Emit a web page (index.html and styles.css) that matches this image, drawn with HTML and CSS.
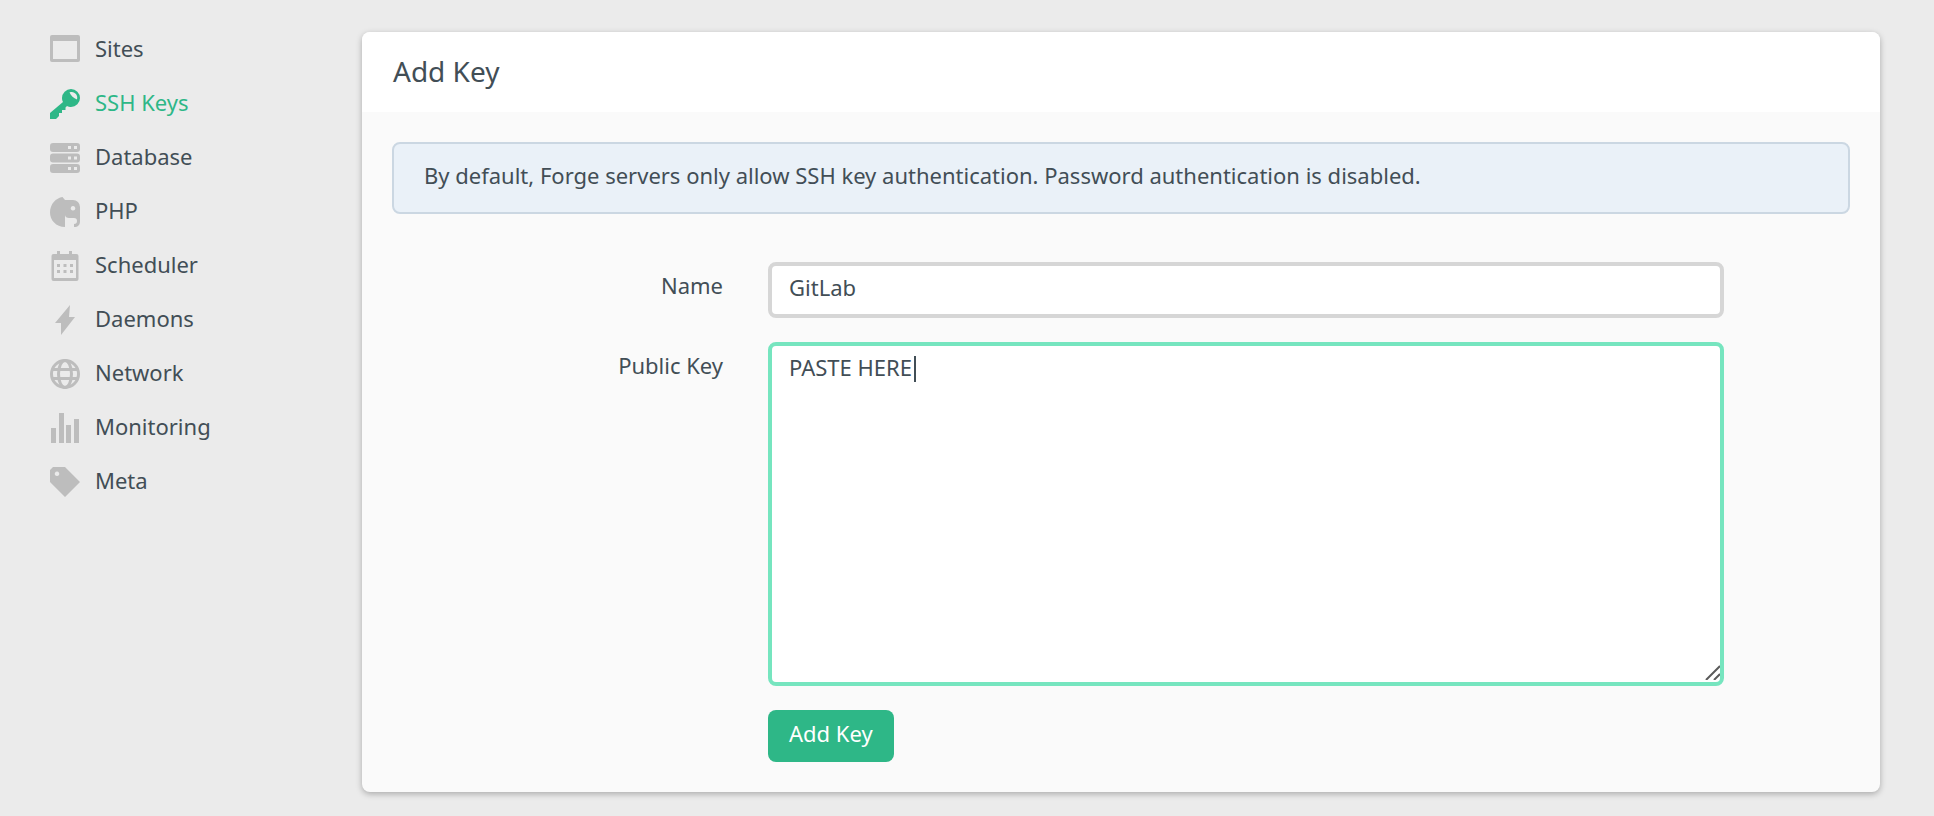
FILE: index.html
```html
<!DOCTYPE html>
<html lang="en">

<head>
    <meta charset="UTF-8">
    <meta name="viewport" content="width=device-width, initial-scale=1.0">
    <title>SSH Keys</title>
    <link rel="stylesheet" href="styles.css">
</head>

<body>
    <div class="container">
        <nav class="sidebar">
            <a class="nav-link" href="#sites">
                <svg class="nav-icon" viewBox="0 0 30 30"><path fill-rule="evenodd" d="M2 0h26a2 2 0 0 1 2 2v23a2 2 0 0 1-2 2H2a2 2 0 0 1-2-2V2a2 2 0 0 1 2-2zM3 6v18h24V6z"/></svg>
                Sites
            </a>
            <a class="nav-link active" href="#keys">
                <svg class="nav-icon" viewBox="0 0 30 30"><path fill-rule="evenodd" d="M21 0a9 9 0 0 1 0 18c-1.500 0-2.500-.2-4-1l-1.500 1.500V21H12v3H9v3l-3 3H0v-6l13-11c-.7-1.500-1-2.500-1-4a9 9 0 0 1 9-9zM19.500 3.500c1.500 3.500 4 5.500 7.500 7C28.500 6 24 1.500 19.500 3.500z"/></svg>
                SSH Keys
            </a>
            <a class="nav-link" href="#database">
                <svg class="nav-icon" viewBox="0 0 30 30"><path fill-rule="evenodd" d="M3 0h24a3 3 0 0 1 3 3v3a3 3 0 0 1-3 3H3a3 3 0 0 1-3-3V3a3 3 0 0 1 3-3zM18 3v3h3V3zM24 3v3h3V3zM3 10.500h24a3 3 0 0 1 3 3v3a3 3 0 0 1-3 3H3a3 3 0 0 1-3-3v-3a3 3 0 0 1 3-3zM18 13.500v3h3v-3zM24 13.500v3h3v-3zM3 21h24a3 3 0 0 1 3 3v3a3 3 0 0 1-3 3H3a3 3 0 0 1-3-3v-3a3 3 0 0 1 3-3zM18 24v3h3v-3zM24 24v3h3v-3z"/></svg>
                Database
            </a>
            <a class="nav-link" href="#php">
                <svg class="nav-icon" viewBox="0 0 30 30"><path fill-rule="evenodd" d="M12.500 0 15 3h8a7 7 0 0 1 7 7v14c0 4-2 6-6 6v-3c2 0 3-1 3-3 0-2-1-3-3-3h-5c-2 0-4-1-4-3v12C6 30 0 23 0 15.500 0 7 6 1 12.500 0zM23 9a2.300 2.300 0 1 0 .01 0z"/></svg>
                PHP
            </a>
            <a class="nav-link" href="#scheduler">
                <svg class="nav-icon" viewBox="0 0 30 30"><path fill-rule="evenodd" d="M7 0h3v3h9V0h3v3h4.500a2 2 0 0 1 2 2v23a2 2 0 0 1-2 2h-23a2 2 0 0 1-2-2V5a2 2 0 0 1 2-2H7zM4 9v18h22V9z"/><path d="M7 13h3v3H7zM13.500 13h3v3h-3zM20 13h3v3h-3zM7 19h3v3H7zM13.500 19h3v3h-3zM20 19h3v3h-3z"/></svg>
                Scheduler
            </a>
            <a class="nav-link" href="#daemons">
                <svg class="nav-icon" viewBox="0 0 30 30"><path d="M20 0 5 18h6v12l14-18h-6z"/></svg>
                Daemons
            </a>
            <a class="nav-link" href="#network">
                <svg class="nav-icon" viewBox="0 0 30 30"><g fill="none" stroke="currentColor" stroke-width="3"><circle cx="15" cy="15" r="13.500"/><ellipse cx="15" cy="15" rx="6.500" ry="13.500"/><path d="M2 10.500h26M2 19.500h26"/></g></svg>
                Network
            </a>
            <a class="nav-link" href="#monitoring">
                <svg class="nav-icon" viewBox="0 0 30 30"><path d="M1 15h5v15H1zM9 0h5v30H9zM16 12h5v18h-5zM24 6h5v24h-5z"/></svg>
                Monitoring
            </a>
            <a class="nav-link" href="#meta">
                <svg class="nav-icon" viewBox="0 0 30 30"><path fill-rule="evenodd" d="M3 0h12l15 15-15 15L0 15V3zM7 4.500a2.300 2.300 0 1 0 .01 0z"/></svg>
                Meta
            </a>
        </nav>

        <main class="panel">
            <h1 class="panel-heading">Add Key</h1>
            <div class="panel-body">
                <div class="alert">By default, Forge servers only allow SSH key authentication. Password authentication is disabled.</div>

                <form>
                    <div class="form-row">
                        <label for="name">Name</label>
                        <div class="field">
                            <input class="form-control" type="text" id="name" value="GitLab">
                        </div>
                    </div>
                    <div class="form-row">
                        <label for="publicKey">Public Key</label>
                        <div class="field">
                            <textarea class="form-control focused" id="publicKey" spellcheck="false">PASTE HERE</textarea>
                            <span class="caret"></span>
                            <svg class="resizer" viewBox="0 0 15 15"><path d="M1 15 15 1M9 15l6-6"/></svg>
                        </div>
                    </div>
                    <div class="form-row">
                        <span class="label-space"></span>
                        <button class="btn" type="button">Add Key</button>
                    </div>
                </form>
            </div>
        </main>
    </div>
</body>

</html>
```
FILE: styles.css
```css
* {
    box-sizing: border-box;
}

body {
    margin: 0;
    background-color: #ebebeb;
    color: #424e56;
    font-family: 'Noto Sans', sans-serif;
    font-size: 22px;
    line-height: 32px;
}

.container {
    display: flex;
    align-items: flex-start;
    padding: 32px 54px 24px 50px;
}

.sidebar {
    display: flex;
    flex-direction: column;
    flex: 0 0 312px;
    gap: 21px;
}

.nav-link {
    display: flex;
    align-items: flex-start;
    gap: 15px;
    color: #424e56;
    text-decoration: none;
}

.nav-icon {
    width: 30px;
    height: 30px;
    margin-top: 3px;
    color: #bdbdbd;
    fill: currentColor;
}

.nav-link.active,
.nav-link.active .nav-icon {
    color: #2eb787;
}

.panel {
    flex: 1;
    min-width: 0;
    background-color: #fafafa;
    border-radius: 8px;
    box-shadow: 0 2px 6px rgba(0, 0, 0, 0.28);
}

.panel-heading {
    margin: 0;
    padding: 19px 31px 21px;
    background-color: #fff;
    border-radius: 8px 8px 0 0;
    font-size: 28px;
    font-weight: 400;
    line-height: 40px;
}

.panel-body {
    padding: 30px;
}

.alert {
    margin-bottom: 48px;
    padding: 15px 30px 21px;
    background-color: #eaf1f8;
    border: 2px solid #cbd7e2;
    border-radius: 8px;
}

form {
    display: flex;
    flex-direction: column;
    gap: 24px;
}

.form-row {
    display: flex;
    align-items: flex-start;
    gap: 45px;
    padding-right: 126px;
}

label,
.label-space {
    flex: 0 0 331px;
    padding-top: 7px;
    text-align: right;
}

.field {
    position: relative;
    flex: 1;
}

.form-control {
    display: block;
    width: 100%;
    height: 56px;
    padding: 5px 17px 11px;
    background-color: #fff;
    border: 4px solid #d6d6d6;
    border-radius: 8px;
    outline: none;
    color: inherit;
    font: inherit;
}

textarea.form-control {
    height: 344px;
    resize: none;
}

.form-control.focused {
    border-color: #76e5bf;
}

.caret {
    position: absolute;
    top: 14px;
    left: 146px;
    width: 2px;
    height: 26px;
    background-color: #424e56;
}

.resizer {
    position: absolute;
    right: 4px;
    bottom: 6px;
    width: 15px;
    height: 15px;
    fill: none;
    stroke: #5a5a5a;
    stroke-width: 2;
}

.btn {
    padding: 7px 21px 13px;
    background-color: #2eb787;
    border: 0;
    border-radius: 8px;
    color: #fff;
    font: inherit;
}
```
